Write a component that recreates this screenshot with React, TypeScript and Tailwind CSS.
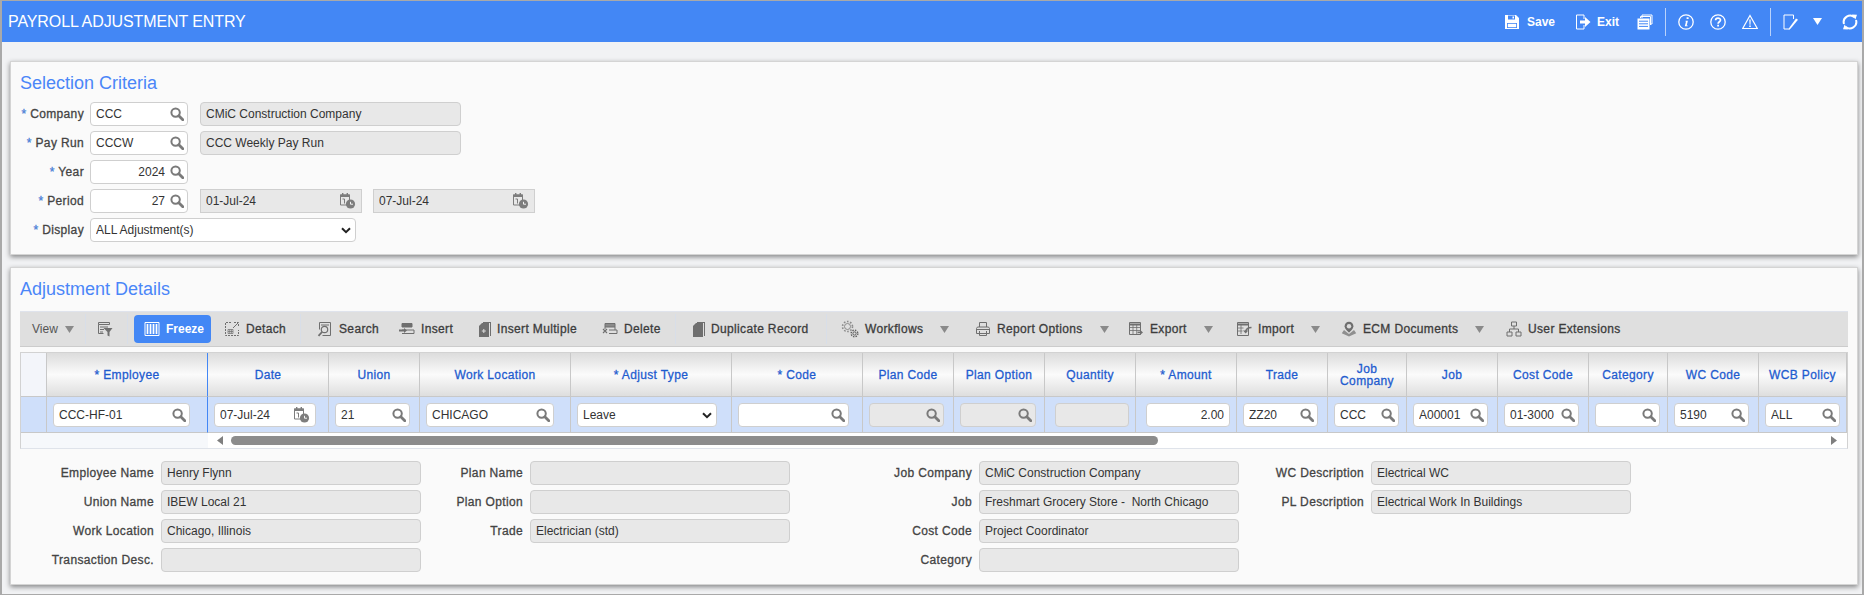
import type { ReactNode } from "react";

const SearchIcon = ({ className = "" }: { className?: string }) => (
  <svg viewBox="0 0 14 14" className={`w-[14px] h-[14px] ${className}`} fill="none" stroke="#7a7a7a">
    <circle cx="5.6" cy="5.6" r="4.2" strokeWidth="2" />
    <path d="M8.8 8.8 12.8 12.8" strokeWidth="2.8" strokeLinecap="round" />
  </svg>
);

const CalendarIcon = () => (
  <svg viewBox="0 0 17 17" className="w-[17px] h-[17px]">
    <path d="M1.5 3h9v10h-9z" fill="none" stroke="#7d7d7d" />
    <path d="M1 2.5h10V5H1zM3 1h1.4v2H3zM7.6 1H9v2H7.6z" fill="#7d7d7d" />
    <path d="M3.5 7h2v4.5" fill="none" stroke="#7d7d7d" />
    <circle cx="11.5" cy="12" r="4.6" fill="#7d7d7d" />
    <path d="M11.5 9.8V12.2H14" fill="none" stroke="#fff" strokeWidth="0.9" />
  </svg>
);

const Chevron = () => (
  <svg viewBox="0 0 10 7" className="w-[10px] h-[7px]" fill="none" stroke="#222" strokeWidth="2">
    <path d="M1 1.2 5 5.2 9 1.2" />
  </svg>
);

const Caret = ({ className = "" }: { className?: string }) => (
  <svg viewBox="0 0 9 7" className={`w-[9px] h-[7px] ${className}`}>
    <path d="M0 0h9L4.5 7z" fill="#8a8a8a" />
  </svg>
);

// toolbar drawings, all on a 16 box unless the shape is narrower
const Ico = ({ children, box = "0 0 16 16", className = "w-[16px] h-[16px]" }: { children: ReactNode; box?: string; className?: string }) => (
  <svg viewBox={box} className={`${className} shrink-0`} fill="none" stroke="#6f6f6f">
    {children}
  </svg>
);

const FilterIcon = () => (
  <Ico>
    <path d="M1.5 1.5h11v2h-11zM1.5 3.5v9h5M3 6h8M3 8.5h4M3 11h3" />
    <path d="M6.5 7h9L12.5 11v4.5l-2-1V11z" fill="#6f6f6f" stroke="none" />
  </Ico>
);
const FreezeIcon = () => (
  <Ico>
    <path d="M1 1.5h14v13H1z" stroke="#fff" />
    <path d="M3.5 3v10M6.5 3v10M9.5 3v10M12.5 3v10" stroke="#fff" strokeWidth="1.7" />
  </Ico>
);
const DetachIcon = () => (
  <Ico>
    <path d="M7 1.5H1.5v13h13V9M10 1.5h4.5V6" strokeDasharray="2 1" />
    <path d="M9 7l5-5" />
    <path d="M4 8.5h5v4H4zM4 10.5h5M5.7 8.5v4M7.4 8.5v4" strokeWidth="0.7" />
  </Ico>
);
const SearchDocIcon = () => (
  <Ico>
    <path d="M2.5 1.5h11v13h-8M2.5 1.5v7M4 4h8" />
    <circle cx="7.5" cy="8.5" r="3.2" strokeWidth="1.2" />
    <path d="M5 11 1.5 14.8" strokeWidth="1.8" />
  </Ico>
);
const InsertIcon = () => (
  <Ico>
    <path d="M3 2.5h10v3.5H3z" fill="#6f6f6f" />
    <path d="M3 9h12v3.5H3" />
    <path d="M0 9.5h5" strokeWidth="2" />
    <path d="M5 7l3 2.5L5 12z" fill="#6f6f6f" stroke="none" />
  </Ico>
);
const InsertMultipleIcon = () => (
  <Ico box="2 0 12 16" className="w-[12px] h-[16px]">
    <path d="M6 1h8v14h-1V2H6z" fill="#6f6f6f" stroke="none" />
    <path d="M2 5l3-3h7v14H2z" fill="#6f6f6f" stroke="none" />
    <path d="M6.8 8v4M4.8 10h4" stroke="#ddd" />
  </Ico>
);
const DeleteIcon = () => (
  <Ico>
    <path d="M3 2.5h10v3.5H3z" fill="#8a8a8a" />
    <path d="M7 9h8v3.5H7M3 6v2M13 6v3" />
    <path d="M1 8l4 4M5 8l-4 4" strokeWidth="1.1" />
  </Ico>
);
const DuplicateIcon = () => (
  <Ico box="2 0 12 16" className="w-[12px] h-[16px]">
    <path d="M6 1h8v14h-1V2H6z" fill="#6f6f6f" stroke="none" />
    <path d="M2 5l3-3h7v14H2z" fill="#6f6f6f" stroke="none" />
  </Ico>
);
const GearsIcon = () => (
  <svg viewBox="0 0 18 18" className="w-[18px] h-[18px] shrink-0" fill="none" stroke="#8a8a8a">
    <circle cx="6.5" cy="6.5" r="3" strokeWidth="1" />
    <circle cx="6.5" cy="6.5" r="5" strokeWidth="1.6" strokeDasharray="1.6 1.6" />
    <circle cx="13.5" cy="13.5" r="1.6" strokeWidth="1" stroke="#5f5f5f" />
    <circle cx="13.5" cy="13.5" r="3.3" strokeWidth="1.5" strokeDasharray="1.4 1.2" stroke="#5f5f5f" />
  </svg>
);
const PrintIcon = () => (
  <Ico>
    <path d="M4.5 6V1.5h7V6M2.5 6h11l1 1.5v5h-13v-5zM4.5 10v4.5h7V10" />
    <path d="M2 8.5h12" />
  </Ico>
);
const ExportIcon = () => (
  <Ico>
    <path d="M1.5 1.5h11v12h-11z" />
    <path d="M1.5 3.5h11" strokeWidth="2" />
    <path d="M1.5 6.5h11M1.5 9.5h11M5 3v10M8.7 3v10" strokeWidth="0.8" />
    <path d="M12 8.8l3 2.6-3 2.6z" fill="#6f6f6f" stroke="none" />
    <path d="M9.5 11.4h3" strokeWidth="1.6" />
  </Ico>
);
const ImportIcon = () => (
  <Ico>
    <path d="M1.5 1.5h11v13h-11z" />
    <path d="M1.5 3.5h11" strokeWidth="2" />
    <path d="M1.5 7h6M1.5 10h5M5 3v10" strokeWidth="0.8" />
    <path d="M15.5 6.5C12 6.5 10 8 9.5 11" strokeWidth="1.6" />
    <path d="M7 9.5l2.7 3 2.5-3z" fill="#6f6f6f" stroke="none" />
  </Ico>
);
const EcmIcon = () => (
  <Ico>
    <path d="M8 0.8a4.4 4.4 0 0 1 4.4 4.4C12.4 8 8 11.5 8 11.5S3.6 8 3.6 5.2A4.4 4.4 0 0 1 8 .8z" fill="#6f6f6f" stroke="none" />
    <circle cx="8" cy="5.2" r="2.2" fill="#ddd" stroke="none" />
    <path d="M3 9 .8 12.2 8 15.5l7.2-3.3L13 9 8 13z" fill="#8f8f8f" stroke="none" />
  </Ico>
);
const OrgIcon = () => (
  <Ico>
    <path d="M5.5 1h5v4h-5zM1 11h5v4H1zM10 11h5v4h-5zM8 5v3M3.5 11V8h9v3" />
  </Ico>
);

// header drawings
const HeadIco = ({ children }: { children: ReactNode }) => (
  <svg viewBox="0 0 16 16" className="w-[16px] h-[16px] shrink-0" fill="none" stroke="#fff">
    {children}
  </svg>
);

// medium weight text: regular face with a hairline stroke and the bold face's width
const medium = "font-normal tracking-[0.35px] [-webkit-text-stroke:0.3px_currentColor]";

type Tool = {
  label?: string;
  icon?: ReactNode;
  caret?: boolean;
  box: string;
  active?: boolean;
};

const tools: (Tool | "sep")[] = [
  { label: "View", box: "w-[53px]" },
  "sep",
  { icon: <FilterIcon />, box: "w-[41px] pl-[11px]" },
  "sep",
  { label: "Freeze", icon: <FreezeIcon />, active: true, box: "w-[77px] ml-[6px] mr-[13px]" },
  { label: "Detach", icon: <DetachIcon />, box: "w-[76px]" },
  "sep",
  { label: "Search", icon: <SearchDocIcon />, box: "w-[82px] ml-[16px]" },
  { label: "Insert", icon: <InsertIcon />, box: "w-[80px]" },
  { label: "Insert Multiple", icon: <InsertMultipleIcon />, box: "w-[123px]" },
  { label: "Delete", icon: <DeleteIcon />, box: "w-[73px]" },
  "sep",
  { label: "Duplicate Record", icon: <DuplicateIcon />, box: "w-[133px] ml-[17px]" },
  "sep",
  { label: "Workflows", icon: <GearsIcon />, caret: true, box: "w-[134px] ml-[14px]" },
  { label: "Report Options", icon: <PrintIcon />, caret: true, box: "w-[153px]" },
  { label: "Export", icon: <ExportIcon />, caret: true, box: "w-[108px]" },
  { label: "Import", icon: <ImportIcon />, caret: true, box: "w-[105px]" },
  { label: "ECM Documents", icon: <EcmIcon />, caret: true, box: "w-[165px]" },
  { label: "User Extensions", icon: <OrgIcon />, box: "w-[125px]" },
];

type Col = {
  head: ReactNode;
  kind: "lookup" | "date" | "select" | "plain" | "disabled" | "disabledLookup";
  value?: string;
  inputW: string;
  pad?: string;
  divider?: boolean;
};

const cols: Col[] = [
  { head: "* Employee", kind: "lookup", value: "CCC-HF-01", inputW: "w-[137px]", divider: true },
  { head: "Date", kind: "date", value: "07-Jul-24", inputW: "w-[102px]" },
  { head: "Union", kind: "lookup", value: "21", inputW: "w-[75px]" },
  { head: "Work Location", kind: "lookup", value: "CHICAGO", inputW: "w-[128px]" },
  { head: "* Adjust Type", kind: "select", value: "Leave", inputW: "w-[140px]" },
  { head: "* Code", kind: "lookup", value: "", inputW: "w-[111px]" },
  { head: "Plan Code", kind: "disabledLookup", inputW: "w-[75px]" },
  { head: "Plan Option", kind: "disabledLookup", inputW: "w-[76px]" },
  { head: "Quantity", kind: "disabled", inputW: "w-[74px]", pad: "pl-[10px]" },
  { head: "* Amount", kind: "plain", value: "2.00", inputW: "w-[84px]", pad: "pl-[10px]" },
  { head: "Trade", kind: "lookup", value: "ZZ20", inputW: "w-[75px]" },
  { head: <>Job<br />Company</>, kind: "lookup", value: "CCC", inputW: "w-[65px]" },
  { head: "Job", kind: "lookup", value: "A00001", inputW: "w-[75px]" },
  { head: "Cost Code", kind: "lookup", value: "01-3000", inputW: "w-[75px]" },
  { head: "Category", kind: "lookup", value: "", inputW: "w-[65px]" },
  { head: "WC Code", kind: "lookup", value: "5190", inputW: "w-[75px]" },
  { head: "WCB Policy", kind: "lookup", value: "ALL", inputW: "w-[75px]" },
];

const inputBase = "block h-[24px] border border-[#cfcfcf] rounded-[4px] text-[12px] text-[#333] outline-none";

const Lookup = ({ value = "", width, right, disabled }: { value?: string; width: string; right?: boolean; disabled?: boolean }) => (
  <div className={`relative ${width}`}>
    <input
      readOnly
      value={value}
      className={`${inputBase} w-full pl-[5px] pr-[22px] ${right ? "text-right" : ""} ${disabled ? "bg-[#e8e8e8]" : "bg-white"}`}
    />
    <SearchIcon className="absolute right-[4px] top-[5px]" />
  </div>
);

const ReadOnly = ({ value = "", width = "w-[260px]" }: { value?: string; width?: string }) => (
  <input readOnly value={value} className={`${inputBase} ${width} bg-[#e8e8e8] px-[5px]`} />
);

const DateField = ({ value, width, disabled }: { value: string; width: string; disabled?: boolean }) => (
  <div className={`relative ${width}`}>
    <input
      readOnly
      value={value}
      className={`${inputBase} w-full pl-[5px] ${disabled ? "bg-[#e8e8e8] rounded-none" : "bg-white"}`}
    />
    <div className="absolute right-[6px] top-[3px]">
      <CalendarIcon />
    </div>
  </div>
);

const SelectField = ({ value, width }: { value: string; width: string }) => (
  <div className={`relative ${width}`}>
    <select defaultValue={value} className={`${inputBase} w-full appearance-none bg-white pl-[5px]`}>
      <option>{value}</option>
    </select>
    <div className="absolute right-[5px] top-[9px]">
      <Chevron />
    </div>
  </div>
);

const Req = ({ label }: { label: string }) => (
  <label className={`w-[64px] mr-[6px] shrink-0 text-right text-[12px] ${medium} text-[#444] whitespace-nowrap`}>
    <span className="text-[#4a7fd6]">*</span> {label}
  </label>
);

const DetailRow = ({ label, value, labelW }: { label: string; value?: string; labelW: string }) => (
  <div className="flex items-center">
    <label className={`${labelW} mr-[7px] shrink-0 text-right text-[12px] ${medium} text-[#444] whitespace-nowrap`}>{label}</label>
    <ReadOnly value={value} />
  </div>
);

const renderCell = (c: Col) => {
  if (c.kind === "date") return <DateField value={c.value ?? ""} width={c.inputW} />;
  if (c.kind === "select") return <SelectField value={c.value ?? ""} width={c.inputW} />;
  if (c.kind === "plain")
    return <input readOnly value={c.value} className={`${inputBase} ${c.inputW} bg-white text-right px-[5px]`} />;
  if (c.kind === "disabled") return <ReadOnly width={c.inputW} />;
  return <Lookup value={c.value} width={c.inputW} disabled={c.kind === "disabledLookup"} />;
};

export default function App() {
  return (
    <div className="w-[1864px] h-[595px] overflow-hidden flex flex-col bg-[#f1f2f4] border-t border-b border-l-2 border-r-2 border-[#a9a9a9] font-['Liberation_Sans',Arial,sans-serif]">
      <header className="h-[41px] shrink-0 bg-[#4387f5] flex items-center text-white">
        <h1 className="ml-[6px] text-[16px] font-normal tracking-[-0.1px] whitespace-nowrap">PAYROLL ADJUSTMENT ENTRY</h1>
        <div className="ml-auto flex items-center h-full pr-[4px]">
          <HeadIco>
            <path d="M1 1h11l3 3v11H1z" fill="#fff" stroke="none" />
            <path d="M4 1.5h7v4H4z" fill="#4387f5" stroke="none" />
            <path d="M8.5 2.5h1.5v2H8.5z" fill="#fff" stroke="none" />
            <path d="M3 9h10v5H3z" fill="#4387f5" stroke="none" />
            <path d="M3.8 9.8h8.4v3.4H3.8z" fill="#fff" stroke="none" />
          </HeadIco>
          <span className="ml-[7px] text-[12px] font-bold">Save</span>
          <div className="ml-[20px]">
            <HeadIco>
              <path d="M9 5V1H1.5v14H9v-4" />
              <path d="M5 6.5h5V3l5.5 5-5.5 5V9.5H5z" fill="#fff" stroke="none" />
            </HeadIco>
          </div>
          <span className="ml-[6px] text-[12px] font-bold">Exit</span>
          <div className="ml-[18px]">
            <HeadIco>
              <path d="M5 4V1h10v9h-2M3.5 4V2.5h10V11" />
              <path d="M.5 4.5h12v11H.5z" fill="#fff" stroke="none" />
              <path d="M2 7.2h9M2 9.8h9M2 12.4h9" stroke="#4387f5" />
            </HeadIco>
          </div>
          <div className="ml-[12px] w-px h-[28px] bg-[#b9d2fb]" />
          <div className="ml-[12px]">
            <HeadIco>
              <circle cx="8" cy="8" r="7.2" strokeWidth="1.3" />
              <path d="M8.6 3.2h2v1.9h-2zM7.6 6.7h2.3L8.7 11.4h1v.9H6.8L8 7.6H7.4z" fill="#fff" stroke="none" />
            </HeadIco>
          </div>
          <div className="ml-[16px]">
            <HeadIco>
              <circle cx="8" cy="8" r="7.2" strokeWidth="1.3" />
              <path d="M5.6 6.2C5.6 3.4 10.5 3.4 10.5 6.1 10.5 7.9 8.1 7.7 8.1 9.8" strokeWidth="1.7" />
              <path d="M7.2 10.8h1.8v1.8H7.2z" fill="#fff" stroke="none" />
            </HeadIco>
          </div>
          <div className="ml-[16px]">
            <HeadIco>
              <path d="M8 1.5 15.3 14.5H.7z" strokeWidth="1.2" />
              <path d="M7.3 5.5h1.4l-.2 5.2H7.5zM7.2 11.5h1.6v1.5H7.2z" fill="#fff" stroke="none" />
            </HeadIco>
          </div>
          <div className="ml-[12px] w-px h-[28px] bg-[#b9d2fb]" />
          <div className="ml-[12px]">
            <HeadIco>
              <path d="M10.5 5V1H1v14h6" />
              <path d="M13 4.5 6.5 13.5l-1 2 2-.8 7.5-8.9z" fill="#fff" stroke="none" />
            </HeadIco>
          </div>
          <svg viewBox="0 0 9 7" className="ml-[14px] w-[9px] h-[7px]">
            <path d="M0 0h9L4.5 7z" fill="#fff" />
          </svg>
          <div className="ml-[20px]">
            <HeadIco>
              <path d="M2 10A6.5 6.5 0 0 1 12.5 3.2" strokeWidth="2" />
              <path d="M14 6A6.5 6.5 0 0 1 3.5 12.8" strokeWidth="2" />
              <path d="M10 .5 15 .8 13.4 5.5zM6 15.5 1 15.2 2.6 10.5z" fill="#fff" stroke="none" />
            </HeadIco>
          </div>
        </div>
      </header>

      <main className="flex-1 flex flex-col gap-[12px] pl-[8px] pr-[4px] pt-[19px]">
        <section className="h-[194px] shrink-0 bg-[#fafafa] border border-[#d4d4d4] shadow-[0_2px_5px_rgba(0,0,0,0.45)] pl-[9px] pt-[10px]">
          <h2 className="text-[18px] leading-[22px] text-[#4a86f8] font-normal">Selection Criteria</h2>
          <div className="mt-[8px] flex flex-col gap-[5px]">
            <div className="flex items-center">
              <Req label="Company" />
              <Lookup value="CCC" width="w-[98px]" />
              <div className="ml-[12px]"><ReadOnly value="CMiC Construction Company" width="w-[261px]" /></div>
            </div>
            <div className="flex items-center">
              <Req label="Pay Run" />
              <Lookup value="CCCW" width="w-[98px]" />
              <div className="ml-[12px]"><ReadOnly value="CCC Weekly Pay Run" width="w-[261px]" /></div>
            </div>
            <div className="flex items-center">
              <Req label="Year" />
              <Lookup value="2024" width="w-[98px]" right />
            </div>
            <div className="flex items-center">
              <Req label="Period" />
              <Lookup value="27" width="w-[98px]" right />
              <div className="ml-[12px]"><DateField value="01-Jul-24" width="w-[162px]" disabled /></div>
              <div className="ml-[11px]"><DateField value="07-Jul-24" width="w-[162px]" disabled /></div>
            </div>
            <div className="flex items-center">
              <Req label="Display" />
              <SelectField value="ALL Adjustment(s)" width="w-[266px]" />
            </div>
          </div>
        </section>

        <section className="h-[318px] shrink-0 bg-[#fafafa] border border-[#d4d4d4] shadow-[0_2px_5px_rgba(0,0,0,0.45)] pl-[9px] pr-[9px] pt-[10px]">
          <h2 className="text-[18px] leading-[22px] text-[#4a86f8] font-normal">Adjustment Details</h2>

          <div className={`mt-[11px] h-[36px] bg-[#dfdfdf] border-t border-t-[#dfe3ec] border-b border-b-[#cccccc] flex items-center pl-[12px] text-[12px] text-[#3c3c3c] ${medium}`}>
            {tools.map((t, i) =>
              t === "sep" ? (
                <div key={i} className="w-px h-[30px] shrink-0 bg-[#d8dee8]" />
              ) : t.active ? (
                <div key={i} className={`${t.box} shrink-0 h-[28px] rounded-[4px] bg-[#4387f5] text-white flex items-center pl-[10px] gap-[6px] font-bold tracking-normal [-webkit-text-stroke:0]`}>
                  {t.icon}
                  <span>{t.label}</span>
                </div>
              ) : (
                <div key={i} className={`${t.box} shrink-0 flex items-center gap-[6px] whitespace-nowrap`}>
                  {t.icon}
                  {t.label === "View" ? (
                    <span className="text-[#555] tracking-normal [-webkit-text-stroke:0]">{t.label}</span>
                  ) : (
                    <span>{t.label}</span>
                  )}
                  {t.label === "View" && <Caret className="ml-[1px]" />}
                  {t.caret && <Caret className="ml-[11px]" />}
                </div>
              )
            )}
          </div>

          <div className="mt-[5px] border border-[#d2d2d2] border-b-[#dfe3ea]">
            <div className="grid grid-cols-[26px_161px_121px_91px_151px_161px_131px_91px_91px_91px_101px_91px_79px_91px_91px_79px_91px_88px]">
              <div className="h-[44px] bg-[#f3f5fa] border-r border-b border-[#c8c8c8]" />
              {cols.map((c, i) => (
                <div
                  key={i}
                  className={`h-[44px] flex items-center justify-center text-center text-[12px] leading-[12px] ${medium} text-[#1f5ccf] border-b border-[#c8c8c8] bg-linear-to-b from-[#dcdcdc] via-[#fbfbfb] to-[#dedede] ${c.divider ? "border-r border-r-[#4387f5]" : "border-r border-r-[#c8c8c8]"}`}
                >
                  <div>{c.head}</div>
                </div>
              ))}
              <div className="h-[36px] bg-[#cfdffa] border-r border-b border-[#c8c8c8]" />
              {cols.map((c, i) => (
                <div
                  key={i}
                  className={`h-[36px] flex items-center bg-[#cfdffa] border-b border-[#c8c8c8] ${c.pad ?? "pl-[6px]"} ${c.divider ? "border-r border-r-[#4387f5]" : "border-r border-r-[#c8c8c8]"}`}
                >
                  {renderCell(c)}
                </div>
              ))}
            </div>
            <div className="h-[15px] flex items-center">
              <div className="w-[187px] h-full bg-[#f6f8fb]" />
              <div className="flex-1 flex items-center bg-white h-full">
                <svg viewBox="0 0 6 9" className="ml-[9px] w-[6px] h-[9px]"><path d="M6 0v9L0 4.5z" fill="#7f7f7f" /></svg>
                <div className="ml-[8px] w-[927px] h-[9px] rounded-full bg-[#8c8c8c]" />
                <svg viewBox="0 0 6 9" className="ml-auto mr-[10px] w-[6px] h-[9px]"><path d="M0 0v9l6-4.5z" fill="#7f7f7f" /></svg>
              </div>
            </div>
          </div>

          <div className="mt-[12px] flex">
            <div className="flex flex-col gap-[5px]">
              <DetailRow labelW="w-[134px]" label="Employee Name" value="Henry Flynn" />
              <DetailRow labelW="w-[134px]" label="Union Name" value="IBEW Local 21" />
              <DetailRow labelW="w-[134px]" label="Work Location" value="Chicago, Illinois" />
              <DetailRow labelW="w-[134px]" label="Transaction Desc." />
            </div>
            <div className="flex flex-col gap-[5px]">
              <DetailRow labelW="w-[102px]" label="Plan Name" />
              <DetailRow labelW="w-[102px]" label="Plan Option" />
              <DetailRow labelW="w-[102px]" label="Trade" value="Electrician (std)" />
            </div>
            <div className="flex flex-col gap-[5px]">
              <DetailRow labelW="w-[182px]" label="Job Company" value="CMiC Construction Company" />
              <DetailRow labelW="w-[182px]" label="Job" value="Freshmart Grocery Store -  North Chicago" />
              <DetailRow labelW="w-[182px]" label="Cost Code" value="Project Coordinator" />
              <DetailRow labelW="w-[182px]" label="Category" />
            </div>
            <div className="flex flex-col gap-[5px]">
              <DetailRow labelW="w-[125px]" label="WC Description" value="Electrical WC" />
              <DetailRow labelW="w-[125px]" label="PL Description" value="Electrical Work In Buildings" />
            </div>
          </div>
        </section>
      </main>
    </div>
  );
}
